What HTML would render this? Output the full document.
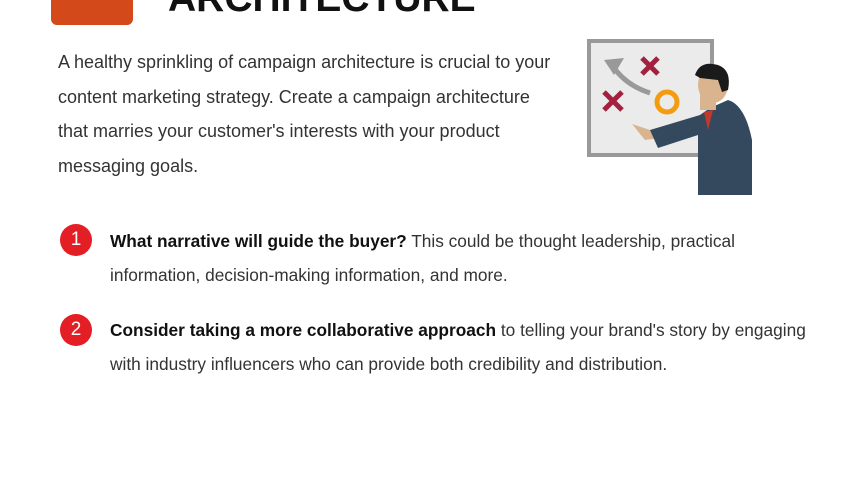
<!DOCTYPE html>
<html><head><meta charset="utf-8"><style>
body{margin:0;width:862px;height:488px;background:#fff;position:relative;overflow:hidden;font-family:"Liberation Sans",Arial,sans-serif;color:#333}
.box{position:absolute;left:51px;top:-20px;width:82px;height:45px;background:#d4491a;border-radius:6px}
.title{position:absolute;left:168px;top:-21px;font-size:39px;line-height:39px;font-weight:bold;color:#111;white-space:nowrap}
.p{position:absolute;left:58px;top:45px;width:500px;font-size:18px;line-height:34.5px}
.item{position:absolute;left:110px;font-size:17.3px;line-height:34px}
.item b{color:#111}
.num{position:absolute;left:60px;width:32px;height:32px;border-radius:50%;background:#e31e24;color:#fff;font-size:19px;line-height:32px;text-align:center}
</style></head><body>
<div class="box"></div>
<div class="title">ARCHITECTURE</div>
<div class="p">A healthy sprinkling of campaign architecture is crucial to your content marketing strategy. Create a campaign architecture that marries your customer's interests with your product messaging goals.</div>
<svg style="position:absolute;left:580px;top:30px" width="180" height="170" viewBox="0 0 180 170">
<rect x="9" y="11" width="123" height="114" fill="#ebebeb" stroke="#999" stroke-width="4"/>
<path d="M70 63 Q45 55 32 35" stroke="#999" stroke-width="5" fill="none"/>
<path d="M24 30 L44 28 L34 45 Z" fill="#999"/>
<path d="M62 28 L78 44 M78 28 L62 44 M24 62 L42 80 M42 62 L24 80" stroke="#a3203f" stroke-width="5"/>
<circle cx="87" cy="72" r="10" fill="none" stroke="#f39c12" stroke-width="5"/>
<path d="M52 94 L70 100 L80 108 L65 110 Z" fill="#d9b48f"/>
<path d="M70 100 L120 85 L130 78 L148 70 Q165 75 172 110 L172 165 L118 165 L118 105 L78 118 Z" fill="#34495e"/>
<path d="M124 82 L128 100 L133 80 Z" fill="#c0392b"/>
<rect x="120" y="55" width="16" height="25" fill="#d9b48f"/>
<ellipse cx="133" cy="55" rx="15" ry="18" fill="#d9b48f"/>
<path d="M115 45 Q120 30 138 35 Q152 40 148 60 L142 62 L138 50 L120 48 Z" fill="#1a1a1a"/>
</svg>
<div class="num" style="top:224px">1</div>
<div class="item" style="top:224px;width:692px"><b>What narrative will guide the buyer?</b> This could be thought leadership, practical information, decision-making information, and more.</div>
<div class="num" style="top:314px">2</div>
<div class="item" style="top:313px;width:722px"><b>Consider taking a more collaborative approach</b> to telling your brand's story by engaging with industry influencers who can provide both credibility and distribution.</div>
</body></html>
